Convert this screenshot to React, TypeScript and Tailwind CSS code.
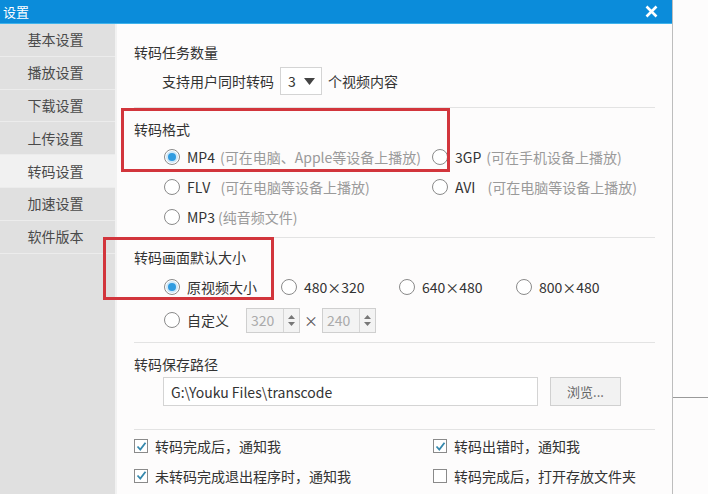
import React from "react";

const menu = ["基本设置", "播放设置", "下载设置", "上传设置", "转码设置", "加速设置", "软件版本"];

const Radio = ({ checked }: { checked?: boolean }) => (
  <span className="relative inline-flex h-[16px] w-[16px] shrink-0 items-center justify-center rounded-full border border-[#8a8a8a] bg-white">
    {checked && <span className="h-[8px] w-[8px] rounded-full bg-[#2f9be0] shadow-[0_0_0_2px_#cfe8f8]" />}
  </span>
);

const Check = ({ checked }: { checked?: boolean }) => (
  <span className="inline-flex h-[14px] w-[14px] shrink-0 items-center justify-center border border-[#8a8a8a] bg-white">
    {checked && (
      <svg width="11" height="11" viewBox="0 0 11 11">
        <path d="M1.5 5.5 L4.3 8.5 L9.5 1.8" fill="none" stroke="#3588ad" strokeWidth="1.8" />
      </svg>
    )}
  </span>
);

const Option = ({
  checked,
  label,
  note,
  gap = "ml-[5px]",
  className,
}: {
  checked?: boolean;
  label: string;
  note?: string;
  gap?: string;
  className?: string;
}) => (
  <div className={"flex items-center " + (className ?? "")}>
    <Radio checked={checked} />
    <span className="ml-[7px] text-[#333]">{label}</span>
    {note && <span className={gap + " text-[#9a9a9a]"}>{note}</span>}
  </div>
);

const Spin = ({ value }: { value: string }) => (
  <div className="flex h-[25px] w-[54px] items-center border border-[#cfcfcf] bg-[#f3f3f3]">
    <span className="flex-1 pl-[4px] text-[#aaa]">{value}</span>
    <div className="flex h-full w-[16px] flex-col items-center justify-center gap-[3px] border-l border-[#d6d6d6]">
      <svg width="7" height="4" viewBox="0 0 7 4"><path d="M0 4 L3.5 0 L7 4Z" fill="#777" /></svg>
      <svg width="7" height="4" viewBox="0 0 7 4"><path d="M0 0 L3.5 4 L7 0Z" fill="#777" /></svg>
    </div>
  </div>
);

const Sep = () => <div className="mr-[17px] h-px bg-[#e3e3e3]" />;

export default function App() {
  return (
    <div
      className="relative h-[494px] w-[708px] overflow-hidden bg-[#fdfcfc] text-[14px]"
      style={{ fontFamily: '"Noto Sans CJK SC", "Noto Sans", sans-serif' }}
    >
      <div className="flex h-full w-[673px] flex-col border-r border-[#bdbdbd]">
        <div className="flex h-[24px] shrink-0 items-center justify-between border-b border-[#3fb3ec] bg-[#0b8cda] pl-[3px] pr-[14px] text-white">
          <span className="text-[13px] leading-none">设置</span>
          <svg width="13" height="13" viewBox="0 0 13 13">
            <path d="M1.5 1.5 L11.5 11.5 M11.5 1.5 L1.5 11.5" stroke="#fff" strokeWidth="2.6" />
          </svg>
        </div>
        <div className="flex flex-1">
          <div className="w-[117px] shrink-0 border-r-2 border-[#f2f2f2] bg-[#e0e0e0]">
            {menu.map((m, i) => (
              <div
                key={m}
                className={
                  "flex h-[32.8px] items-center justify-center border-b border-[#ececec] pr-[4px] text-[#4a4a4a] " +
                  (i === 4 ? "bg-[#f1f1f1]" : "")
                }
              >
                {m}
              </div>
            ))}
          </div>

          <div className="flex flex-1 flex-col pl-[17px] leading-[20px]">
            <div className="mt-[18px] text-[#333]">转码任务数量</div>
            <div className="mt-[5px] flex h-[28px] items-center pl-[28px] text-[#333]">
              <span>支持用户同时转码</span>
              <div className="ml-[6px] flex h-[28px] w-[42px] items-center border border-[#d4d4d4] bg-white pl-[7px]">
                <span>3</span>
                <svg className="ml-[8px]" width="11" height="7" viewBox="0 0 11 7"><path d="M0 0 L11 0 L5.5 7Z" fill="#444" /></svg>
              </div>
              <span className="ml-[6px]">个视频内容</span>
            </div>
            <div className="mt-[12px]"><Sep /></div>

            <div className="mt-[11px] text-[#333]">转码格式</div>
            <div className="mt-[3px] flex h-[30px] items-center pl-[30px]">
              <Option checked label="MP4" note="(可在电脑、Apple等设备上播放)" className="w-[268px]" />
              <Option label="3GP" note="(可在手机设备上播放)" />
            </div>
            <div className="flex h-[30px] items-center pl-[30px]">
              <Option label="FLV" note="(可在电脑等设备上播放)" gap="ml-[10px]" className="w-[268px]" />
              <Option label="AVI" note="(可在电脑等设备上播放)" gap="ml-[12px]" />
            </div>
            <div className="flex h-[30px] items-center pl-[30px]">
              <Option label="MP3" note="(纯音频文件)" gap="ml-[3px]" />
            </div>
            <div className="mt-[5px]"><Sep /></div>

            <div className="mt-[9px] text-[#333]">转码画面默认大小</div>
            <div className="mt-[5px] flex h-[30px] items-center pl-[30px]">
              <Option checked label="原视频大小" className="w-[117px]" />
              <Option label="480×320" className="w-[118px]" />
              <Option label="640×480" className="w-[117px]" />
              <Option label="800×480" />
            </div>
            <div className="mt-[3px] flex h-[30px] items-center pl-[30px]">
              <Option label="自定义" className="w-[82px]" />
              <Spin value="320" />
              <span className="mx-[4px] text-[#555]">×</span>
              <Spin value="240" />
            </div>
            <div className="mt-[7px]"><Sep /></div>

            <div className="mt-[11px] text-[#333]">转码保存路径</div>
            <div className="mt-[3px] flex items-center pl-[29px]">
              <div className="flex h-[29px] w-[375px] items-center border border-[#d4d4d4] bg-white pl-[7px] text-[#333]">
                G:\Youku Files\transcode
              </div>
              <div className="ml-[12px] flex h-[29px] w-[71px] items-center justify-center border border-[#d0d0d0] bg-[#f2f2f2] text-[13px] text-[#666]">
                浏览...
              </div>
            </div>
            <div className="mt-[23px]"><Sep /></div>

            <div className="mt-[1px] flex h-[30px] items-center text-[#333]">
              <div className="flex w-[299px] items-center gap-[7px]"><Check checked />转码完成后，通知我</div>
              <div className="flex items-center gap-[7px]"><Check checked />转码出错时，通知我</div>
            </div>
            <div className="flex h-[29px] items-center text-[#333]">
              <div className="flex w-[299px] items-center gap-[7px]"><Check checked />未转码完成退出程序时，通知我</div>
              <div className="flex items-center gap-[7px]"><Check />转码完成后，打开存放文件夹</div>
            </div>
          </div>
        </div>
      </div>

      <div className="absolute left-[673px] top-[397px] h-px w-[35px] bg-[#9a9a9a]" />

      <div className="absolute left-[121px] top-[108px] h-[64px] w-[329px] border-[3px] border-[#d2353c]" />
      <div className="absolute left-[103px] top-[237px] h-[63px] w-[171px] border-[3px] border-[#d2353c]" />
    </div>
  );
}
